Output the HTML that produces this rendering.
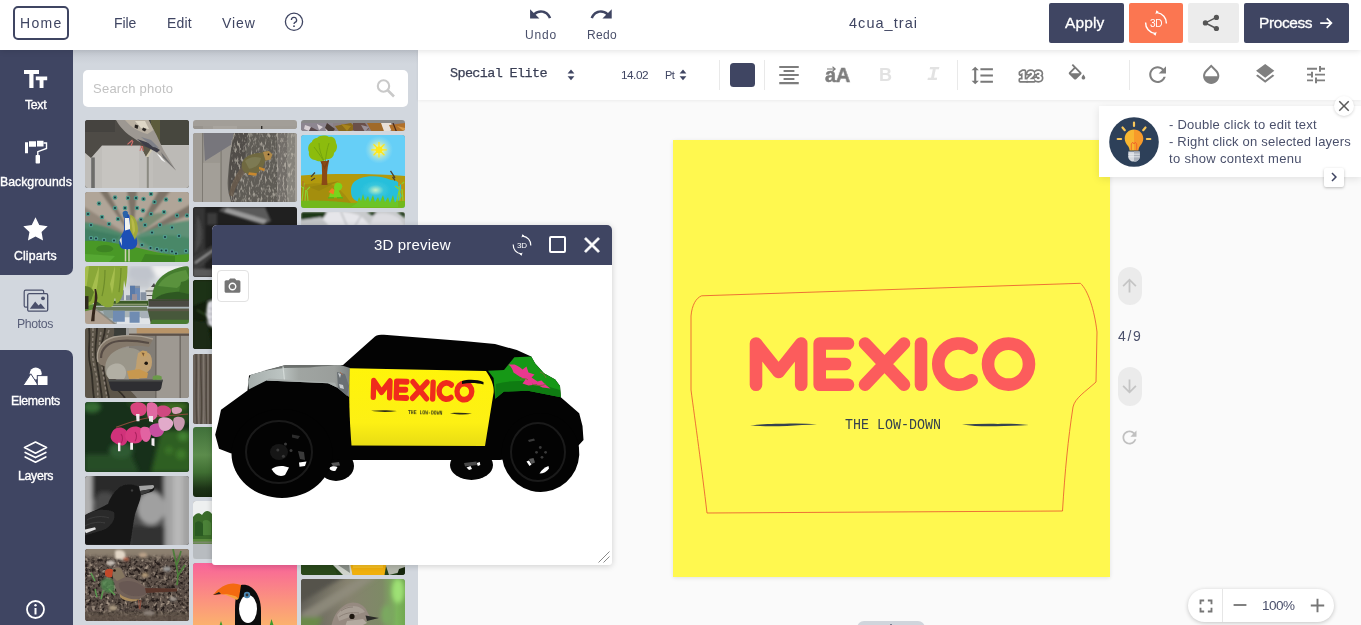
<!DOCTYPE html>
<html><head><meta charset="utf-8">
<style>
*{box-sizing:border-box;margin:0;padding:0}
html,body{width:1361px;height:625px;overflow:hidden;background:#fafafa;font-family:"Liberation Sans",sans-serif;color:#3f4562}
.abs{position:absolute}
.t,text{will-change:transform}
#top{position:absolute;left:0;top:0;width:1361px;height:50px;background:#fff;z-index:5;box-shadow:0 1px 6px rgba(0,0,0,.12)}
#side{position:absolute;left:0;top:50px;width:73px;height:575px;background:#d2d7de}
#panel{position:absolute;left:73px;top:50px;width:345px;height:575px;background:#d2d7de;overflow:hidden}
#tool{position:absolute;left:418px;top:50px;width:943px;height:50px;background:#fff;box-shadow:0 1px 3px rgba(0,0,0,.06)}
.t{position:absolute;white-space:nowrap;line-height:1}
.lab{font-size:12.3px;color:#fff;-webkit-text-stroke:.35px #fff}
.ph{position:absolute;width:104px;border-radius:3px;overflow:hidden;background:#888}
</style></head><body>
<!-- TOPBAR -->
<div id="top">
<div class="abs" style="left:13px;top:6px;width:56px;height:34px;border:2px solid #3f4562;border-radius:5px"></div>
<div class="t" style="left:20px;top:16px;font-size:14px;letter-spacing:1.28px">Home</div>
<div class="t" style="left:114px;top:16px;font-size:14px;letter-spacing:-.1px">File</div>
<div class="t" style="left:166.500px;top:16px;font-size:14px;letter-spacing:.2px">Edit</div>
<div class="t" style="left:221.500px;top:16px;font-size:14px;letter-spacing:.94px">View</div>
<svg class="abs" style="left:283px;top:11px" width="22" height="22" viewBox="0 0 22 22"><circle cx="11" cy="10.8" r="8.6" fill="none" stroke="#3f4562" stroke-width="1.3"/><path d="M8.4 9a2.6 2.6 0 1 1 3.6 2.400c-.7.4-1 .8-1 1.7" fill="none" stroke="#3f4562" stroke-width="1.3"/><circle cx="11" cy="15.2" r=".9" fill="#3f4562"/></svg>
<svg class="abs" style="left:527.900px;top:1.500px" width="24.800" height="24.800" viewBox="0 0 24 24"><path d="M12.500 8c-2.650 0-5.050.99-6.900 2.600L2 7v9h9l-3.620-3.620c1.390-1.160 3.160-1.880 5.120-1.880 3.540 0 6.550 2.310 7.600 5.500l2.370-.78C21.080 11.030 17.150 8 12.500 8z" fill="#3f4562"/></svg>
<svg class="abs" style="left:589.400px;top:1.500px" width="24.800" height="24.800" viewBox="0 0 24 24"><path d="M18.400 10.600C16.550 8.990 14.150 8 11.500 8c-4.650 0-8.580 3.030-9.960 7.220L3.900 16c1.050-3.190 4.050-5.500 7.600-5.500 1.950 0 3.730.72 5.120 1.880L13 16h9V7l-3.600 3.600z" fill="#3f4562"/></svg>
<div class="t" style="left:524.7px;top:29px;font-size:12px;letter-spacing:.84px;color:#4a506b">Undo</div>
<div class="t" style="left:586.7px;top:29px;font-size:12px;letter-spacing:.3px;color:#4a506b">Redo</div>
<div class="t" style="left:849px;top:16px;font-size:14.500px;letter-spacing:1.04px">4cua_trai</div>
<div class="abs" style="left:1049px;top:3px;width:75px;height:40px;background:#3f4562;border-radius:2px"></div>
<div class="t" style="left:1064.800px;top:14.500px;font-size:15.500px;letter-spacing:.15px;color:#fff;-webkit-text-stroke:.3px #fff">Apply</div>
<div class="abs" style="left:1129px;top:3px;width:54px;height:40px;background:#fb7651;border-radius:2px"></div>
<svg class="abs" style="left:1143px;top:10px" width="26" height="26" viewBox="0 0 26 26"><path d="M2.6 12.500A10.5 10.5 0 0 0 12 23.400M23.4 13.500A10.5 10.5 0 0 0 14 2.6" fill="none" stroke="#fff" stroke-width="1.4"/><path d="M10.2 24l3.4-2.2-1 4zM15.8 2l-3.4 2.2 1-4z" fill="#fff"/><text x="13" y="16.6" font-family="Liberation Sans" font-size="10" fill="#fff" text-anchor="middle" letter-spacing="-.3">3D</text></svg>
<div class="abs" style="left:1188px;top:3px;width:51px;height:40px;background:#ececec;border-radius:2px"></div>
<svg class="abs" style="left:1200px;top:13px" width="22" height="20" viewBox="0 0 22 20"><path d="M16.400 4.400L5.400 9.900l11 5.600" fill="none" stroke="#555" stroke-width="1.500"/><circle cx="16.400" cy="4.400" r="2.600" fill="#555"/><circle cx="5.400" cy="9.900" r="2.600" fill="#555"/><circle cx="16.400" cy="15.500" r="2.600" fill="#555"/></svg>
<div class="abs" style="left:1244px;top:3px;width:105px;height:40px;background:#3f4562;border-radius:2px"></div>
<div class="t" style="left:1259.300px;top:14.500px;font-size:15.500px;letter-spacing:-.4px;color:#fff;-webkit-text-stroke:.3px #fff">Process</div>
<svg class="abs" style="left:1318px;top:15px" width="16" height="16" viewBox="0 0 16 16"><path d="M2.2 8.100h11M8.7 3.400l4.7 4.7-4.7 4.7" fill="none" stroke="#fff" stroke-width="1.7"/></svg>
</div>
<!-- SIDEBAR -->
<div id="side">
<div class="abs" style="left:0;top:0;width:73px;height:225px;background:#3f4562;border-bottom-right-radius:7px"></div>
<div class="abs" style="left:0;top:300px;width:73px;height:275px;background:#3f4562;border-top-right-radius:7px"></div>
<!-- Tt -->
<svg class="abs" style="left:24px;top:20px" width="24" height="18" viewBox="0 0 24 18"><path d="M0 0h15v4h-5.500v14h-4.200v-14h-5.300zM11.8 6.500h11.400v3.700h-3.700v7.800h-3.900v-7.800h-3.800z" fill="#fff"/></svg>
<div class="t lab" style="left:25px;top:48.500px;letter-spacing:-.32px">Text</div>
<!-- roller -->
<svg class="abs" style="left:24px;top:90px" width="24" height="24" viewBox="0 0 24 24"><path d="M1 2.300h3v11h-3zM5 1.300h7v5.400h-7zM13 0.800h6.500v5.800h-6.500z" fill="#fff"/><path d="M19.5 3h3v5.500l-8.7 3.200v3.5" fill="none" stroke="#fff" stroke-width="1.4"/><rect x="11.6" y="15" width="4.4" height="8.5" rx=".8" fill="#fff"/></svg>
<div class="t lab" style="left:0.300px;top:125.800px;letter-spacing:0">Backgrounds</div>
<!-- star -->
<svg class="abs" style="left:23px;top:166.500px" width="25" height="24" viewBox="0 0 25 24"><path d="M12.5 0.300l3.750 7.750 8.450 1.150-6.150 5.9 1.5 8.4-7.550-4.050-7.550 4.050 1.5-8.4-6.150-5.9 8.450-1.150z" fill="#fff"/></svg>
<div class="t lab" style="left:13.900px;top:199.500px;letter-spacing:.13px">Cliparts</div>
<!-- photos -->
<svg class="abs" style="left:23px;top:239px" width="26" height="24" viewBox="0 0 26 24"><rect x="1.2" y="1.2" width="19.5" height="17" rx="1.5" fill="none" stroke="#4a506b" stroke-width="1.2"/><rect x="4.7" y="4.7" width="20" height="17.5" rx="1.5" fill="#d2d7de" stroke="#4a506b" stroke-width="1.3"/><path d="M6.8 19.800l5.4-7.2 3.3 3.8 2.2-2 4.6 5.400z" fill="#4a506b"/><circle cx="20" cy="9.3" r="1.9" fill="#4a506b"/></svg>
<div class="t" style="left:17.300px;top:267.500px;font-size:12.300px;letter-spacing:-.36px;color:#5a607a">Photos</div>
<!-- elements -->
<svg class="abs" style="left:23px;top:317px" width="26" height="19" viewBox="0 0 26 19"><circle cx="12.7" cy="6.5" r="6" fill="#fff"/><path d="M7.8 6.800l7.6 11.700h-15.400z" fill="#fff" stroke="#3f4562" stroke-width="1"/><rect x="14.3" y="8.6" width="10.7" height="9.9" fill="#fff" stroke="#3f4562" stroke-width="1"/></svg>
<div class="t lab" style="left:10.800px;top:345.300px;letter-spacing:-.3px">Elements</div>
<!-- layers -->
<svg class="abs" style="left:23px;top:390.500px" width="25" height="23" viewBox="0 0 25 23"><path d="M12.5 1l11 5.6-11 5.6-11-5.600z" fill="none" stroke="#fff" stroke-width="1.7" stroke-linejoin="round"/><path d="M2.2 11.400l10.3 5.2 10.3-5.200M2.2 16l10.3 5.2 10.3-5.2" fill="none" stroke="#fff" stroke-width="1.7" stroke-linejoin="round" stroke-linecap="round"/></svg>
<div class="t lab" style="left:17.900px;top:420.300px;letter-spacing:-.3px">Layers</div>
<!-- info -->
<svg class="abs" style="left:25px;top:548.500px" width="21" height="21" viewBox="0 0 21 21"><circle cx="10.5" cy="10.5" r="8.5" fill="none" stroke="#fff" stroke-width="1.8"/><rect x="9.5" y="9" width="2" height="6.5" fill="#fff"/><circle cx="10.5" cy="6.3" r="1.2" fill="#fff"/></svg>
</div>
<!-- PANEL -->
<svg width="0" height="0" style="position:absolute"><defs>
<filter id="b1" x="-5%" y="-5%" width="110%" height="110%"><feGaussianBlur stdDeviation=".45"/></filter>
<filter id="b2" x="-5%" y="-5%" width="110%" height="110%"><feGaussianBlur stdDeviation=".9"/></filter>
<filter id="b3" x="-10%" y="-10%" width="120%" height="120%"><feGaussianBlur stdDeviation="2"/></filter>
<filter id="nzd" x="0" y="0" width="100%" height="100%" color-interpolation-filters="sRGB"><feTurbulence type="fractalNoise" baseFrequency=".3" numOctaves="2" seed="3" result="n"/><feColorMatrix in="n" type="matrix" values="0 0 0 0 .14  0 0 0 0 .11  0 0 0 0 .10  2.6 2.6 0 0 -2.4"/></filter>
<filter id="nzl" x="0" y="0" width="100%" height="100%" color-interpolation-filters="sRGB"><feTurbulence type="fractalNoise" baseFrequency=".28" numOctaves="2" seed="11" result="n"/><feColorMatrix in="n" type="matrix" values="0 0 0 0 .64  0 0 0 0 .58  0 0 0 0 .52  0 2.4 2.4 0 -2.5"/></filter>
<filter id="nzg" x="0" y="0" width="100%" height="100%" color-interpolation-filters="sRGB"><feTurbulence type="fractalNoise" baseFrequency=".5 .2" numOctaves="2" seed="7" result="n"/><feColorMatrix in="n" type="matrix" values="0 0 0 0 .72  0 0 0 0 .70  0 0 0 0 .66  0 2.6 2.6 0 -2.55"/></filter>
</defs></svg>
<div id="panel">
<div class="abs" style="left:0;top:0;width:345px;height:14px;background:linear-gradient(#c4c9d1,#d2d7de)"></div>
<div class="abs" style="left:10px;top:20px;width:325px;height:36.600px;background:#fff;border-radius:5px"></div>
<div class="t" style="left:20.300px;top:32px;font-size:13px;letter-spacing:.24px;color:#c2c2c2">Search photo</div>
<svg class="abs" style="left:302px;top:27.600px" width="22" height="20" viewBox="0 0 22 20"><circle cx="8.500" cy="8" r="5.700" fill="none" stroke="#c9c9c9" stroke-width="2.100"/><path d="M12.700 12.300l6.300 6.200" stroke="#c9c9c9" stroke-width="2.600" fill="none"/></svg>
<div class="ph" style="left:12px;top:70px;height:67.500px"><svg width="104" height="100%" viewBox="0 0 104 67.600" preserveAspectRatio="none">
<rect width="104" height="68" fill="#4e4b46"/><rect x="62" width="42" height="26" fill="#47473e"/><rect x="66" width="9" height="25" fill="#5c5b3c"/><rect x="0" y="0" width="30" height="12" fill="#45433f"/>
<g filter="url(#b1)">
<path d="M-1 32l7 6 11-12.500h38.500l5.500 11 7-11.500h37v44h-106z" fill="#c0beba"/>
<path d="M17 26h37v42h-37z" fill="#c6c4c0"/><path d="M68 25.500h36v42h-36z" fill="#bcbab6"/>
<path d="M55.500 25.500l5.500 11 7-7.500z" fill="#5e5a48"/><path d="M61 36.500l7-11 1.500 1-7 11.500z" fill="#cfc8b0"/>
<rect x="6.200" y="37.500" width="3.600" height="31" fill="#6d6d6b"/><rect x="61.800" y="37" width="2" height="31" fill="#8b8a82"/>
<path d="M31 0c4 7 8 11 13 15l9 6 14 7 24 22.500-12.500-20.500-7-15-8-15z" fill="#9d9892"/>
<path d="M40 0l23.500 0 5 10-6 4c-8-2-16-6-22.500-14z" fill="#b9b0a2"/><path d="M50 1l10 0 4 8-8-1z" fill="#ded6c6"/>
<path d="M50 4.500l3.500 1-1 3.500-3-1.500zM58 7.500l3.500 1.500-1.500 2.500-3-1.500z" fill="#2a2624"/>
<path d="M52 19l12 4 11 7-3 2.500-12-6.500z" fill="#3d3d47"/><path d="M56 17l10 3 8 8-6-1z" fill="#7e8088"/>
<path d="M71.500 33l4 3 5 6.500-4-2.500z" fill="#f4f4f4"/><path d="M76 32l15 18.500-13-13z" fill="#6e6e6e"/>
<path d="M47.500 20l-5 4.500M48 21l-2 5M56.500 26l-1.500 5M57.500 26l.5 5" stroke="#d4706c" stroke-width="1.100" fill="none"/>
</g></svg></div>
<div class="ph" style="left:12px;top:142px;height:69.500px"><svg width="104" height="100%" viewBox="0 0 104 69.500" preserveAspectRatio="none">
<rect width="104" height="70" fill="#93887b"/>
<g filter="url(#b2)">
<path d="M48 46L-2 14v-16h16zM48 46L22-2h20zM48 46L52-2h22zM48 46L86-2h20v14zM48 46L106 22v18z" fill="#b0a598"/>
<path d="M48 46L14-2h8zM48 46L42-2h10zM48 46L74-2h12zM48 46L106 12v10z" fill="#7d7367"/>
<path d="M-2 30c14 2 28 6 40 12l10 6-14 6-36-4z" fill="#4f8a6c"/><path d="M-2 36l38 8-10 8-28-2z" fill="#3f7e62"/>
<path d="M50 44c16-8 36-14 56-16v40l-26-6-24-6z" fill="#5f9076"/><path d="M52 46c16-4 34-4 54 0v22l-30-6z" fill="#4a8868"/>
<path d="M50 30c8-6 22-10 34-10l-30 22z" fill="#7d8c74"/>
</g>
<g filter="url(#b1)"><circle cx="30" cy="5.5" r="2.300" fill="#4f9a8a"/><circle cx="30" cy="5.5" r="1" fill="#16323c"/><circle cx="43" cy="6" r="2.300" fill="#4f9a8a"/><circle cx="43" cy="6" r="1" fill="#16323c"/><circle cx="51" cy="6" r="2.300" fill="#4f9a8a"/><circle cx="51" cy="6" r="1" fill="#16323c"/><circle cx="58.5" cy="7" r="2.300" fill="#4f9a8a"/><circle cx="58.5" cy="7" r="1" fill="#16323c"/><circle cx="69.5" cy="10" r="2.300" fill="#4f9a8a"/><circle cx="69.5" cy="10" r="1" fill="#16323c"/><circle cx="81" cy="7.5" r="2.300" fill="#4f9a8a"/><circle cx="81" cy="7.5" r="1" fill="#16323c"/><circle cx="95" cy="8" r="2.300" fill="#4f9a8a"/><circle cx="95" cy="8" r="1" fill="#16323c"/><circle cx="14" cy="11.5" r="2.300" fill="#4f9a8a"/><circle cx="14" cy="11.5" r="1" fill="#16323c"/><circle cx="30" cy="16" r="2.300" fill="#4f9a8a"/><circle cx="30" cy="16" r="1" fill="#16323c"/><circle cx="40" cy="16" r="2.300" fill="#4f9a8a"/><circle cx="40" cy="16" r="1" fill="#16323c"/><circle cx="52" cy="16" r="2.300" fill="#4f9a8a"/><circle cx="52" cy="16" r="1" fill="#16323c"/><circle cx="58" cy="18.5" r="2.300" fill="#4f9a8a"/><circle cx="58" cy="18.5" r="1" fill="#16323c"/><circle cx="79" cy="20" r="2.300" fill="#4f9a8a"/><circle cx="79" cy="20" r="1" fill="#16323c"/><circle cx="92" cy="23.5" r="2.300" fill="#4f9a8a"/><circle cx="92" cy="23.5" r="1" fill="#16323c"/><circle cx="102" cy="23.5" r="2.300" fill="#4f9a8a"/><circle cx="102" cy="23.5" r="1" fill="#16323c"/><circle cx="17" cy="25" r="2.300" fill="#4f9a8a"/><circle cx="17" cy="25" r="1" fill="#16323c"/><circle cx="33" cy="27" r="2.300" fill="#4f9a8a"/><circle cx="33" cy="27" r="1" fill="#16323c"/><circle cx="56" cy="27.5" r="2.300" fill="#4f9a8a"/><circle cx="56" cy="27.5" r="1" fill="#16323c"/><circle cx="66" cy="22" r="2.300" fill="#4f9a8a"/><circle cx="66" cy="22" r="1" fill="#16323c"/><circle cx="75" cy="33" r="2.300" fill="#4f9a8a"/><circle cx="75" cy="33" r="1" fill="#16323c"/><circle cx="87" cy="35.5" r="2.300" fill="#4f9a8a"/><circle cx="87" cy="35.5" r="1" fill="#16323c"/><circle cx="6" cy="33" r="2.300" fill="#4f9a8a"/><circle cx="6" cy="33" r="1" fill="#16323c"/><circle cx="24" cy="32" r="2.300" fill="#4f9a8a"/><circle cx="24" cy="32" r="1" fill="#16323c"/><circle cx="60" cy="33" r="2.300" fill="#4f9a8a"/><circle cx="60" cy="33" r="1" fill="#16323c"/><circle cx="67" cy="40.5" r="2.300" fill="#4f9a8a"/><circle cx="67" cy="40.5" r="1" fill="#16323c"/><circle cx="80" cy="45" r="2.300" fill="#4f9a8a"/><circle cx="80" cy="45" r="1" fill="#16323c"/><circle cx="94" cy="44" r="2.300" fill="#4f9a8a"/><circle cx="94" cy="44" r="1" fill="#16323c"/><circle cx="6" cy="46" r="2.300" fill="#4f9a8a"/><circle cx="6" cy="46" r="1" fill="#16323c"/><circle cx="11" cy="46.5" r="2.300" fill="#4f9a8a"/><circle cx="11" cy="46.5" r="1" fill="#16323c"/><circle cx="19" cy="48" r="2.300" fill="#4f9a8a"/><circle cx="19" cy="48" r="1" fill="#16323c"/><circle cx="29" cy="48.5" r="2.300" fill="#4f9a8a"/><circle cx="29" cy="48.5" r="1" fill="#16323c"/><circle cx="57" cy="53" r="2.300" fill="#4f9a8a"/><circle cx="57" cy="53" r="1" fill="#16323c"/><circle cx="65.5" cy="56" r="2.300" fill="#4f9a8a"/><circle cx="65.5" cy="56" r="1" fill="#16323c"/><circle cx="72" cy="57" r="2.300" fill="#4f9a8a"/><circle cx="72" cy="57" r="1" fill="#16323c"/><circle cx="76.5" cy="58.5" r="2.300" fill="#4f9a8a"/><circle cx="76.5" cy="58.5" r="1" fill="#16323c"/><circle cx="81" cy="58.5" r="2.300" fill="#4f9a8a"/><circle cx="81" cy="58.5" r="1" fill="#16323c"/><circle cx="87" cy="59.5" r="2.300" fill="#4f9a8a"/><circle cx="87" cy="59.5" r="1" fill="#16323c"/><circle cx="91" cy="61.5" r="2.300" fill="#4f9a8a"/><circle cx="91" cy="61.5" r="1" fill="#16323c"/><circle cx="101" cy="59" r="2.300" fill="#4f9a8a"/><circle cx="101" cy="59" r="1" fill="#16323c"/><circle cx="3" cy="22" r="2.300" fill="#4f9a8a"/><circle cx="3" cy="22" r="1" fill="#16323c"/><circle cx="66" cy="2" r="2.300" fill="#4f9a8a"/><circle cx="66" cy="2" r="1" fill="#16323c"/></g>
<g filter="url(#b1)">
<path d="M-2 49c12-1 24 0 36 3l20 4c12 3 24 6 36 7l16-1v10h-108z" fill="#4a9828"/>
<path d="M14 54c6-2 12-1 14 2s-6 5-12 4-6-4-2-6zM60 62l30 2v6h-34z" fill="#3c8420"/><path d="M0 62l30 2-6 6h-24z" fill="#57a832"/>
<path d="M39.500 24c1-3 4-3 5 0l1 14 6 8c2 6 0 11-6 11.500s-10 0-11-5c-1-6 3-10 4.500-14.500z" fill="#1c4fb6"/>
<path d="M37.500 21c1-3 5-3 5.500 0l-1 4.500h-3.500z" fill="#2a62a8"/><path d="M40 26l4 0 1.500 11-5.500 1.500z" fill="#f1f1ee"/><path d="M34.500 48l2-3 .5 9z" fill="#e4e4e0"/>
<path d="M45 23c5 0 8 8 8 16l-3 9-5-10z" fill="#a0a93a"/><path d="M46 25c3 2 4 8 4 14l-2 4z" fill="#b8ba48"/>
<path d="M40.500 57v12.500M44 57v12.500" stroke="#cfcfb6" stroke-width="1.500"/>
</g></svg></div>
<div class="ph" style="left:12px;top:216px;height:58px"><svg width="104" height="100%" viewBox="0 0 104 57.800" preserveAspectRatio="none">
<rect width="104" height="58" fill="#d6dade"/>
<g filter="url(#b3)"><path d="M44 0h30v10l-14 6-18-4z" fill="#c0c4cc"/><path d="M66 0h36v6l-30 6z" fill="#f2f2f2"/><path d="M42 14h24v8h-24z" fill="#c4c8ce"/></g>
<g filter="url(#b1)">
<path d="M33.500 34.200v-10h5.500v10zM41 34.200v-5h4v-9.500h10v14.500zM55.500 34.200v-8h6v8z" fill="#8792a2"/><path d="M45 19.700h5v14h-5z" fill="#5a7aa8"/><path d="M50 22h5v12h-5z" fill="#6d8ab4"/><path d="M47 28h5v6h-5z" fill="#9a9098"/>
<path d="M61.500 34.200v-10l3-3.400h5l1 13.400z" fill="#d8d8d4"/><path d="M60.500 25h10M61.500 29.500h8" stroke="#5a5a58" stroke-width="1"/><path d="M66 21l3-4 2 4z" fill="#4a4a48"/>
<path d="M67 33c0-8 3-16 8-21 6-6 16-11 28-12l1 0v33z" fill="#447c2e"/><path d="M73 20c4-8 14-14 28-16l3 8-12 10z" fill="#5a923e"/><path d="M70 33c6-6 18-8 34-7v8z" fill="#2e5822"/><path d="M96 16l8-2v14l-10-2z" fill="#3a6e28"/>
<path d="M63.500 33.200h40.500v10.500h-40.500z" fill="#4c4842"/><path d="M63.500 33.200h40.500v1.500h-40.500z" fill="#3a4a2c"/>
<path d="M9 34.700h54.500v5h-54.500z" fill="#3a5a28"/><path d="M16 37.700h46v1h-46z" fill="#a4ac84"/>
<path d="M8 40.700h96v18h-96z" fill="#aab4b8"/><path d="M10 40.700h52v4h-52z" fill="#6a7a5c"/>
<path d="M32 51h34v7h-34z" fill="#e0e4e8"/><path d="M27.800 44.600h12v11h-12zM44.600 45.600h10v11h-10z" fill="#6f8cb2"/><path d="M56 46h8v6h-8z" fill="#a8b0b8"/><path d="M18 44h10v8h-8z" fill="#8a9a9c"/>
<path d="M62.500 42.600h41.500v16h-38z" fill="#46583a"/><path d="M62.500 42.600h41.500v2.400h-41.500z" fill="#5c5848"/><path d="M67 53.600h37v5h-39z" fill="#4a7a30"/>
<path d="M0 44l9-1.400 21.700 15v1h-30.700z" fill="#b0a090"/><path d="M9 42.600l2.500 0 19.500 15-1.500 1z" fill="#8a8880"/><path d="M0 38h9v5l-9 2z" fill="#5a8a30"/>
<path d="M0 0h42.500c0 8-.5 14-2 22l-1.500-8-1 14c-2 6-4 9-7 9.500l-1-6-2 8c-3 2-7 2-10 0l-6-4-12 6z" fill="#8aa838"/>
<path d="M4 0c-1 10-2 20-4 28v-28zM14 0c0 12-2 22-4 30l-3-8zM30 0c0 10-1 20-3 28l-2-10z" fill="#a6be4e"/><path d="M0 20c4 0 7 2 9 6l-3 9-6 3z" fill="#5e7e26"/><path d="M20 4c0 10-1 18-3 26M36 2c0 8-1 16-2 24" stroke="#6e8c2a" stroke-width="1.200" fill="none"/>
<path d="M9.500 23c1 8 0 14-2 20l-1.500 12h3.500c0-8 1.500-14 2.500-20 1-4 0-8-1-12z" fill="#35281a"/><path d="M0 30h3.500v13h-3.500z" fill="#2e2a1c"/>
</g></svg></div>
<div class="ph" style="left:12px;top:278px;height:69.700px"><svg width="104" height="100%" viewBox="0 0 104 69.700" preserveAspectRatio="none">
<rect width="104" height="70" fill="#948f88"/>
<g filter="url(#b1)">
<rect x="41" y="0" width="63" height="70" fill="#98938c"/><rect x="44" y="7" width="26" height="63" fill="#827d76"/><rect x="70" y="6" width="1.500" height="64" fill="#6e6962"/><rect x="94.500" y="6" width="1.500" height="64" fill="#726d66"/><rect x="72" y="6" width="22" height="64" fill="#9e9992"/>
<rect x="28" y="0" width="14" height="8.500" fill="#3a3c38"/><rect x="41" y="0" width="3" height="10" fill="#9a9a98"/><rect x="44" y="0" width="8" height="6" fill="#a8a49c"/><rect x="51.700" y="0" width="53" height="5.600" fill="#b89468"/><rect x="44" y="5.600" width="61" height="2.200" fill="#5c5148"/>
<path d="M0 0h29c1 6-1 12-5 18-4 8-4 16-2 24 4 10 16 10 30 28h-52z" fill="#5c544a"/>
</g>
<g filter="url(#b1)"><path d="M4 0c2 12-2 24 1 36s2 22 4 34M12 0c0 10-3 20-1 30s4 26 6 40M20 0c0 8-4 14-4 22s4 30 8 48M26 56c4 4 10 8 14 14" stroke="#332d27" stroke-width="1.800" fill="none"/><path d="M8 0c0 14-2 28 2 42s2 18 3 28M16 4c-2 10-2 20 0 30s4 24 6 36M24 2c-2 6-3 10-3 14" stroke="#8a8074" stroke-width="1.500" fill="none" stroke-dasharray="3 2"/></g>
<g filter="url(#b1)">
<path d="M13 34c-3-12 4-22 16-25 12-2 26-2 39 2l-4 8c-10-2-22-2-30 2-6 4-10 10-12 18-4-1-8-3-9-5z" fill="#84786a"/><path d="M16 30c0-10 8-16 18-17 10-1 20 0 30 2" stroke="#564c44" stroke-width="2.200" fill="none"/><path d="M13 34c-3-12 4-22 16-25 12-2 26-2 39 2" stroke="#a89e90" stroke-width="1.400" fill="none"/>
<path d="M20.500 44c-2-14 8-24 22-24 8 0 12 2 14 6l2 16-6 9h-28c-2-2-4-4-4-7z" fill="#9a968a"/><path d="M22 42c2-6 10-8 15-5s5 10 2 14h-15c-2-3-3-6-2-9z" fill="#b2afa4"/>
<path d="M53 25c4-2 10-2 12.500 2 2 4 2 10 0 14l-4 4-8 6-8-2c4-4 6-10 6-16z" fill="#c0a070"/><path d="M54.700 24l3-1.500 4.500 1-1 5-5 0z" fill="#c8a060"/><path d="M56.500 24.500l3 .500-1 3.500z" fill="#7a5a3a"/><path d="M42 43l12-2 9 4-1 5-18 1z" fill="#c89850"/><circle cx="61.200" cy="35.200" r="1.800" fill="#1a1410"/>
<path d="M23.300 51.700h54.500l-1.500 8c-.5 2-2 3.300-5 3.300h-41c-3 0-4.500-1.300-5-3.300z" fill="#2e2e30"/><path d="M23.300 51.700h54.500v1.800h-54.500z" fill="#4c4e4c"/><path d="M67.700 48.500c3-1.500 6-1.500 9 0v3.200h-9z" fill="#6a9a4a"/>
</g></svg></div>
<div class="ph" style="left:12px;top:352px;height:70px"><svg width="104" height="100%" viewBox="0 0 104 69.500" preserveAspectRatio="none">
<rect width="104" height="70" fill="#17301a"/>
<g filter="url(#b3)"><ellipse cx="7" cy="5" rx="9" ry="6" fill="#356a32"/><path d="M76 28h30v42h-40z" fill="#2e5e22"/><circle cx="98" cy="34" r="5" fill="#438230"/><circle cx="96" cy="52" r="5" fill="#3c7a2a"/><circle cx="84" cy="48" r="4" fill="#3a7428"/><path d="M0 52h46l8 18h-54z" fill="#284e26"/><ellipse cx="36" cy="48" rx="12" ry="8" fill="#2e5a32"/><path d="M40 0h64v20l-30 4z" fill="#25481e"/><ellipse cx="88" cy="4" rx="14" ry="4" fill="#3c6c24"/></g>
<g filter="url(#b1)">
<path d="M31 25c14-5 30-10 44-11s20-1 28-2" stroke="#8a4a3a" stroke-width="1" fill="none"/>
<path d="M47 2c4-3 12-2 14 2s0 9-5 10-9-1-10-5 -1-5 1-7z" fill="#d8457e"/><path d="M63 1c4-2 9 0 10 5s-1 11-5 12-6-3-6-8 -1-7 1-9z" fill="#e06aa2"/><path d="M73 5c4-3 12-1 13 3s-4 7-9 7-6-7-4-10z" fill="#cf4880"/><path d="M87 6c4-2 10-1 10 2s-4 4-7 4-4-4-3-6z" fill="#d8a0b8"/>
<path d="M51 12h3.500v7h-3zM64 14h4v6l-4-1z" fill="#f0e6ec"/>
<path d="M27 30c2-5 9-6 13-3s4 10 1 14-8 2-12-1-4-6-2-10z" fill="#d0307a"/><path d="M42 28c3-4 10-5 14-2s3 10 0 13-9 3-13 0-3-8-1-11z" fill="#d83a80"/><path d="M56 26c2-2 7-2 9 1s1 10-2 12-6-1-7-5 -1-6 0-8z" fill="#e264a2"/><path d="M65 24c3-3 10-4 13-1s1 9-3 11-9 0-10-4 -1-4 0-6z" fill="#c650a0"/>
<path d="M74 17c3-3 10-2 13 1s0 8-4 10-8 0-9-4 -1-5 0-7z" fill="#e2aaca"/><path d="M89 16c3-2 8-2 10 1s0 9-3 11-6-1-7-5 -1-5 0-7z" fill="#c898b0"/>
<path d="M36 32c2 2 2 6 0 9M50 30c2 2 2 6 0 9" stroke="#a8205c" stroke-width="1" fill="none"/>
<path d="M33 40.500h2.400v8.500h-2.400zM45.200 40.500h2.800v7h-2.800zM66.500 36h3v8l-3-1z" fill="#f4ecf0"/>
</g></svg></div>
<div class="ph" style="left:12px;top:425.500px;height:69px"><svg width="104" height="100%" viewBox="0 0 104 69.200" preserveAspectRatio="none">
<rect width="104" height="70" fill="#4a4a4a"/>
<g filter="url(#b3)"><rect x="-4" y="-4" width="12" height="46" fill="#b0b0b0"/><rect x="7" y="-4" width="73" height="28" fill="#2a2a2a"/><rect x="79" y="-4" width="30" height="80" fill="#a2a2a2"/><rect x="88" y="-4" width="10" height="80" fill="#b8b8b8"/><ellipse cx="66" cy="32" rx="14" ry="17" fill="#a0a0a0"/><rect x="44" y="50" width="36" height="24" fill="#303030"/><rect x="-4" y="40" width="12" height="34" fill="#5a5a5a"/><ellipse cx="20" cy="24" rx="10" ry="8" fill="#4a4a4a"/></g>
<g filter="url(#b1)">
<path d="M33 13c3-4 10-5 16-4l6 2 14 0c1 2 0 4-3 5l-10 3-1 5-5 14c-2 10-3 20-5 31h-46v-29l24-12c2-6 6-12 10-15z" fill="#161616"/>
<path d="M54 10l14-1c2 1 1 3-1 4l-12 2z" fill="#a4a4a4"/><path d="M55 15l11-2-2 3-8 3z" fill="#3a3a3a"/><circle cx="47" cy="14.500" r="1.200" fill="#3c3c3c"/>
<path d="M-1 40c8-6 20-8 30-4 2 6-2 14-10 18l-20 6z" fill="#2b2b2b"/><path d="M2 44c8-4 16-4 22-2M0 50c8-4 14-4 20-3" stroke="#404040" stroke-width=".8" fill="none"/>
<path d="M-1 54l11-2.500 1 2-10 4z" fill="#e0e0e0"/>
</g></svg></div>
<div class="ph" style="left:12px;top:499px;height:71.600px"><svg width="104" height="100%" viewBox="0 0 104 71.500" preserveAspectRatio="none">
<rect width="104" height="72" fill="#5c5048"/>
<rect width="104" height="72" filter="url(#nzd)"/><rect width="104" height="72" filter="url(#nzl)"/>
<g filter="url(#b3)"><rect x="-4" y="-4" width="112" height="12" fill="#8c8070"/><rect x="-4" y="64" width="112" height="12" fill="#5e5248" opacity=".8"/></g>
<g filter="url(#b2)"><path d="M30 2c3-2 9-1 10 2l1 5c-3 2-9 2-11 0z" fill="#e2d6c6"/><path d="M39 8l5 1-1 3-5-1z" fill="#b05a40"/><ellipse cx="26" cy="14" rx="4" ry="2.500" fill="#c8c0b8"/><ellipse cx="82" cy="20" rx="4" ry="2.500" fill="#9a9a98"/><ellipse cx="58" cy="6" rx="4" ry="2.500" fill="#b8a088"/><ellipse cx="28" cy="59" rx="4" ry="3" fill="#a89880"/><ellipse cx="60" cy="26" rx="3.500" ry="2.500" fill="#b09878"/><ellipse cx="88" cy="50" rx="4" ry="2" fill="#a09890"/><ellipse cx="64" cy="64" rx="6" ry="2.500" fill="#8a8078"/></g>
<g filter="url(#b1)">
<path d="M88 0l3 14 2 12M96 2l-4 14M100 16l-8 12M93 26l-1 10" stroke="#4d7d3a" stroke-width="1.700" fill="none"/>
<path d="M16 32c4-4 10-4 13 0l1 8c-2 4-6 5-10 3s-5-7-4-11z" fill="#4f8a50" opacity=".8" filter="url(#b2)"/><path d="M6 24l4 8M10 40l2 8M18 42l-2 8M24 40l6 6" stroke="#5a9a50" stroke-width="1.500" fill="none"/>
<path d="M27 19c3-3 8-2 10 1l4 8c8 1 16 5 20 11l1 6c-4 4-10 6-18 6-8-1-12-6-14-14l-2-8c-1-4-2-7-1-10z" fill="#72625a"/><path d="M28 20c2-2 6-2 8 0l4 8-8 4-4-4z" fill="#84745e"/>
<path d="M34 34c8-4 18-2 26 5l1 6c-6 3-14 3-20 0s-8-7-7-11z" fill="#675852"/><path d="M35 45c4 4 12 6 20 5l-4 2c-6 1-12 0-16-4z" fill="#aa8c5c"/>
<path d="M20 22c2-3 6-3 8-1l-1 7c-3 1-6 0-7-2z" fill="#c24a2a"/><circle cx="29.500" cy="21.500" r="1.300" fill="#1c1410"/>
<path d="M60 39l32 .5v3l-31 1.500z" fill="#58362c"/><path d="M53.500 51l1 9M56 51l-1 9" stroke="#8a5040" stroke-width="1.100"/>
</g></svg></div>
<div class="ph" style="left:120px;top:70px;height:8.500px;background:#a29e98"><svg width="104" height="100%" viewBox="0 0 104 8.500" preserveAspectRatio="none"><rect width="104" height="9" fill="#a09c96"/><rect x="20" width="24" height="9" fill="#a8a49e"/><rect x="68" width="1.400" height="9" fill="#2e2c28"/><rect x="0" width="10" height="9" fill="#98948e"/></svg></div>
<div class="ph" style="left:120px;top:82.800px;height:69.400px"><svg width="104" height="100%" viewBox="0 0 104 69.700" preserveAspectRatio="none">
<rect width="104" height="70" fill="#9b9790"/>
<g filter="url(#b1)">
<rect x="0" y="0" width="9.500" height="70" fill="#a19d96"/><rect x="9" y="0" width="1.200" height="70" fill="#7e7a73"/><rect x="27.500" y="0" width="1.200" height="70" fill="#7e7a73"/><rect x="10" y="30" width="17" height="40" fill="#a39f98"/>
<path d="M10.400 0h31l-3 11.500-26.400 16.500z" fill="#77767c"/>
<path d="M41 0h61v70h-63c-4-8-5-16-4-26 1-16 3-30 6-44z" fill="#5f5c57"/><rect x="102" y="0" width="2" height="70" fill="#a09c95"/>
<path d="M84 0h18v70h-18z" fill="#7a7670" opacity=".7"/><path d="M94 0h8v70h-8z" fill="#8f8b84" opacity=".7"/><path d="M41 0h14l-4 30-10 40h-3c-4-20-1-50 3-70z" fill="#4c4945" opacity=".7"/>
</g>
<rect x="38" y="0" width="64" height="70" filter="url(#nzg)" opacity=".8"/>
<g filter="url(#b1)">
<path d="M50 32c-6 8-12 18-14 30l4 2c2-10 8-20 14-26z" fill="#6a5c4c" opacity=".85"/>
<path d="M49 30c2-6 10-10 18-10l7-2 5 3-2 5-5 2c-1 6-4 10-8 12l-4 3-8-3c-3-3-4-7-3-10z" fill="#6f6941"/><path d="M52 28c4-4 10-5 16-3-1 6-5 10-12 11z" fill="#7d7a52"/>
<path d="M70 19l6-1 3.500 3.500-2 5-5 1z" fill="#b08a4a"/><path d="M56 39.500l8 1-1 2.500-8-1zM66 34l6 2-1 2.500-5-2z" fill="#c8882e"/><circle cx="75.500" cy="21.500" r=".9" fill="#1a1410"/>
</g></svg></div>
<div class="ph" style="left:120px;top:156.800px;height:70px"><svg width="104" height="100%" viewBox="0 0 104 70" preserveAspectRatio="none"><rect width="104" height="70" fill="#202020"/>
<g filter="url(#b2)"><path d="M30 0h42l6 14-8 4-44-14z" fill="#5a5a5a"/><path d="M34 1l40 12-3 4-40-12z" fill="#9a9a9a"/><path d="M0 0h12v70h-12z" fill="#343434"/><path d="M4 8c4 6 6 16 4 28l-6 10z" fill="#4a4a4a"/><path d="M14 6h10v12h-10z" fill="#3a3a3a"/>
<path d="M0 50l20-12 6 6-18 16-8 4z" fill="#3c3c3c"/><path d="M2 56l20-14" stroke="#b8b8b8" stroke-width="1.200"/><path d="M0 62h20v8h-20z" fill="#5a5a5a"/></g></svg></div>
<div class="ph" style="left:120px;top:230px;height:69.400px;background:#16260f"><svg width="104" height="100%" viewBox="0 0 104 69.400" preserveAspectRatio="none"><rect width="104" height="70" fill="#131f0d"/><g filter="url(#b2)"><path d="M0 0h20v18l-20 8z" fill="#1e3216"/><path d="M0 40l14 2 6 28h-20z" fill="#1a2c12"/><path d="M4 30l14 8" stroke="#2c4420" stroke-width="2"/><path d="M15 22l7-3v30l-6-4c-3-8-3-16-1-23z" fill="#e6e6ec"/><path d="M15 28l7 2M15 34l7 0M15 40l7-1" stroke="#a8a8b4" stroke-width="1"/></g></svg></div>
<div class="ph" style="left:120px;top:303.800px;height:70px;background:#5a4a3c"><svg width="104" height="100%" viewBox="0 0 104 70" preserveAspectRatio="none"><rect width="104" height="70" fill="#6a625a"/><g filter="url(#b1)"><path d="M3 0c1 20-1 40 1 70M8 0c-1 24 2 46 0 70M13 0c1 20-1 44 1 70M17 0v70" stroke="#4f463e" stroke-width="1.400" fill="none"/><path d="M5.500 0c1 22-1 44 .5 70M10.500 0c0 24 1 48 0 70M15 0v70" stroke="#80776e" stroke-width="1.200" fill="none"/></g></svg></div>
<div class="ph" style="left:120px;top:377.200px;height:69.500px;background:linear-gradient(#40703a,#5c8c4c 40%,#3f6e32 65%,#1c3216 88%,#16280f)"></div>
<div class="ph" style="left:120px;top:451.200px;height:57.400px"><svg width="104" height="100%" viewBox="0 0 104 57.400" preserveAspectRatio="none"><rect width="104" height="58" fill="#eef0f0"/><g filter="url(#b1)"><path d="M0 16c3-4 6-5 9-2 3-5 7-5 10-1l1 4v26h-20z" fill="#3a6c2c"/><path d="M2 22c3-3 6-2 8 1s2 8 0 12h-8z" fill="#2c5a24"/><path d="M10 20c3-2 6-1 8 2v12h-8z" fill="#4c8238"/><rect y="38" width="104" height="5" fill="#5a8a3c"/><rect y="43" width="104" height="15" fill="#b8bcc0"/><rect y="40.500" width="104" height="2" fill="#7a8a6a"/></g></svg></div>
<div class="ph" style="left:120px;top:513px;height:70px"><svg width="104" height="100%" viewBox="0 0 104 70" preserveAspectRatio="none">
<defs><linearGradient id="tg" x1="0" y1="0" x2="0" y2="1"><stop offset="0" stop-color="#f8649a"/><stop offset=".5" stop-color="#fb9080"/><stop offset=".92" stop-color="#fbb46c"/><stop offset="1" stop-color="#fbb46c"/></linearGradient></defs>
<rect width="104" height="70" fill="url(#tg)"/>
<path d="M48 22c10-2 20 8 20 26v22h-26v-20c0-10 0-20 6-28z" fill="#0c0c0c"/><ellipse cx="55" cy="46" rx="9" ry="14" fill="#fff"/><circle cx="54" cy="32" r="3.2" fill="#4a88b4"/><circle cx="54" cy="32" r="1.4" fill="#333"/>
<path d="M48 22c-10-4-20 0-28 10 10-2 18 0 26 3z" fill="#f46a10"/><path d="M20 32l6-3 2 2z" fill="#222"/><path d="M30 31c6 0 10 1 16 4l-2 2c-4-2-8-4-14-6z" fill="#f8a23a"/>
<path d="M24 70l4-12 4 12zM74.500 70l4-14 4.500 14z" fill="#3a9a2a"/>
</svg></div>
<div class="ph" style="left:228px;top:70px;height:10.600px"><svg width="104" height="100%" viewBox="0 0 104 10.600" preserveAspectRatio="none"><rect width="104" height="11" fill="#8a7f84"/>
<g filter="url(#b1)"><path d="M0 0h32v11h-32z" fill="#8d8690"/><path d="M4 2l6 2-2 4-5-2zM16 1l6 3-4 3zM24 5l5 2-3 3z" fill="#d8d0d4"/><path d="M10 4l8 4-4 3-6-3z" fill="#5a4a4c"/><path d="M26 0l8 6-4 5-6-6z" fill="#4a3a34"/>
<path d="M34 3l16-3 6 6-16 5z" fill="#8a6a1a"/><path d="M40 1l10 2-4 5z" fill="#a8841e"/><path d="M52 0h12l4 6-10 5-6-4z" fill="#6a5048"/><path d="M60 2l8 2-4 5z" fill="#9a9098"/>
<path d="M66 0h16l4 8-14 3z" fill="#a06a2a"/><path d="M80 0l10 0 2 6-8 5z" fill="#e8e0d8"/><path d="M88 2l16-2v11h-12z" fill="#b0702c"/><path d="M92 0l4 10" stroke="#4a2a1a" stroke-width="1.200"/><path d="M96 3l8 2v4z" fill="#d89a48"/></g></svg></div>
<div class="ph" style="left:228px;top:84.900px;height:73.600px"><svg width="104" height="100%" viewBox="0 0 104 73.700" preserveAspectRatio="none">
<defs><radialGradient id="sun"><stop offset="0" stop-color="#fff27a"/><stop offset=".3" stop-color="#e8f4a0" stop-opacity=".9"/><stop offset="1" stop-color="#a8e4f8" stop-opacity="0"/></radialGradient><radialGradient id="pd"><stop offset="0" stop-color="#c8f0c4"/><stop offset=".55" stop-color="#38c6dc"/><stop offset="1" stop-color="#27bfdb"/></radialGradient></defs>
<rect width="104" height="74" fill="#66cff7"/><circle cx="78" cy="14.800" r="14" fill="url(#sun)"/>
<g stroke="#ffe61a" stroke-width="1.300"><path d="M78 7v15.600M70.200 14.800h15.600M72.500 9.300l11 11M83.500 9.300l-11 11"/></g><circle cx="78" cy="14.800" r="3.400" fill="#ffe818"/>
<g filter="url(#b1)">
<path d="M0 40.500c30-2 72-2 104 .5v33h-104z" fill="#b29a10"/><path d="M0 50c16-3 28-2 36 2l8 8 6 8h-50z" fill="#a48e0e"/><path d="M8 52l30-6-20 10z" fill="#9a860c"/>
<path d="M0 66c16-1 34 0 50 2l54-2v8h-104z" fill="#72b81a"/>
<path d="M60 43c8-3 22-2 30 2 4 0 8 2 10 5s-2 6 0 9-2 8-8 9-20 2-30 0-12-6-12-12 2-10 10-13z" fill="#27bfdb"/><ellipse cx="74.600" cy="55.200" rx="15" ry="9.500" fill="url(#pd)"/>
<path d="M56 68l2-6 2 4 2-7 2 7 3-5 2 6 3-7 2 7 3-5 2 5 3-7 2 7 3-5 2 6 3-8 2 8 3-6v10h-47z" fill="#6cc428"/>
<path d="M20.500 26c.5 8 1 16 0 24h6c-1-8-.5-16 1.500-24z" fill="#8a4a18"/><path d="M19.500 25l4 8 4-8" stroke="#7a4216" stroke-width="1.400" fill="none"/>
<path d="M16 3c3-3 9-3 12-1 4-1 7 2 7 6 2 3 1 8-2 10 0 4-4 7-8 6-3 3-8 3-11 1-4 0-7-4-6-8-2-4 0-9 3-10 0-2 3-4 5-4z" fill="#8cbc10"/><path d="M18 8c0 6 2 12 5 18M28 8c-2 6-3 12-3.500 18M13 12c3 4 6 8 9 13" stroke="#6f9e0a" stroke-width=".8" fill="none"/>
<path d="M29 58c1-4 7-5 9-2l3 6.500h-13zM34 49c2-2 6-1.500 7 1s-1 5.500-4 6-4-2-4-4z" fill="#7ad41e"/><path d="M27.500 57l3.500-4 2.500 2-1 4.500z" fill="#f08020"/><path d="M27 62h6v1.500h-6zM36 62h6v1.500h-6z" fill="#5cb414"/>
<path d="M1 66l2-18M4 66l1-14M7 66l-1-10M5 56l4-4M3 54l-3-3" stroke="#8ad030" stroke-width="1.200" fill="none"/><path d="M2 46v6M5 50v5" stroke="#b07820" stroke-width="1.400"/>
<path d="M99 66l-1-18M102 66l-1-12M96 66l2-10M98 54l-4-3M100 50l3-3" stroke="#8ad030" stroke-width="1.200" fill="none"/><path d="M98 45v6M101 49v5" stroke="#c08a20" stroke-width="1.400"/>
<path d="M10 42l4-4.500M10 45.500l4-2.500M89.500 36l4.500 7M91.500 42l2.500 3.500" stroke="#4a4030" stroke-width="1.300"/>
</g></svg></div>
<div class="ph" style="left:228px;top:161.800px;height:70px"><svg width="104" height="100%" viewBox="0 0 104 70" preserveAspectRatio="none"><rect width="104" height="70" fill="#c8cacc"/>
<g filter="url(#b2)"><path d="M0 0h28l-6 6-22 2z" fill="#1c3814"/><path d="M66 0h10l-4 4zM96 0h8v6z" fill="#1c3814"/>
<path d="M26 0c10-2 24 0 34 4l10 10h-52z" fill="#e6e6ea"/><path d="M74 2c8-2 18 0 24 4l6 8h-36z" fill="#dcdce0"/><path d="M0 8l20-3 8 9h-28z" fill="#c2c4c6"/><path d="M40 0l6 14M60 4l-6 10" stroke="#b4b6ba" stroke-width="1.200"/></g></svg></div>
<div class="ph" style="left:228px;top:455px;height:69.500px"><svg width="104" height="100%" viewBox="0 0 104 69.500" preserveAspectRatio="none"><rect width="104" height="70" fill="#24421a"/>
<g filter="url(#b1)"><path d="M0 58h32l4 12h-36z" fill="#2a4a1c"/><path d="M30 58l20 0 2 12h-10c-4-4-8-8-12-12z" fill="#d0d4cc"/><path d="M34 58l14 0 1 10z" fill="#8a9088"/><path d="M84 58h20v8l-16 4z" fill="#b4b8ac"/><path d="M49 58h36.500l-2 12h-32z" fill="#f0b010"/><path d="M52 60h30v3h-30z" fill="#f8c020"/><path d="M98 64l6-2v8h-8z" fill="#16280e"/></g></svg></div>
<div class="ph" style="left:228px;top:529px;height:70px"><svg width="104" height="100%" viewBox="0 0 104 70" preserveAspectRatio="none">
<defs><linearGradient id="bg9" x1="0" y1="0" x2="1" y2="0"><stop offset="0" stop-color="#64625a"/><stop offset=".45" stop-color="#86826f"/><stop offset=".78" stop-color="#7e8a66"/><stop offset=".92" stop-color="#7cb45c"/><stop offset="1" stop-color="#72a850"/></linearGradient></defs>
<rect width="104" height="70" fill="url(#bg9)"/>
<g filter="url(#b3)"><path d="M-4 -4h50l-50 30z" fill="#55534b"/><path d="M0 34l60-36 16 0-76 50z" fill="#918d7e" opacity=".8"/><ellipse cx="97" cy="12" rx="6" ry="12" fill="#9ee074"/><path d="M-4 38h26l-6 12h-20z" fill="#6a8a4a"/><ellipse cx="86" cy="36" rx="6" ry="10" fill="#7aa860"/></g>
<g filter="url(#b1)">
<path d="M30 50c1-8 4-16 9.500-20.500 4-4 8-6 12.500-6 6 0 10 3 12.500 6l4 7.500-2 4-8 3v6z" fill="#968a80"/><path d="M36 36c4-6 10-9 16-9s10 3 12 6l-10 3-16 6z" fill="#a89e94"/><path d="M40 32c4-3 8-4 12-4M38 38c6-4 12-5 20-4" stroke="#857a70" stroke-width=".8" fill="none"/>
<path d="M64.500 36.400l13.500 2.600-12 3z" fill="#2a2a28"/><circle cx="51" cy="37.400" r="2.600" fill="#1a1210"/><path d="M46 42l16-2 4 4-8 4h-14z" fill="#b4aaa0"/>
</g></svg></div>
</div>
<!-- TOOLBAR -->
<div id="tool">
<div class="t" style="left:31.500px;top:17.300px;font-family:'Liberation Mono',monospace;font-size:13.500px;letter-spacing:-.65px;color:#3a3f55;-webkit-text-stroke:.25px #3a3f55">Special Elite</div>
<svg class="abs" style="left:149px;top:19px" width="8" height="12" viewBox="0 0 8 12"><path d="M.6 4.500L4 .5l3.4 4zM.6 7.200L4 11.200l3.4-4z" fill="#3f4562"/></svg>
<div class="t" style="left:202.500px;top:19.500px;font-size:11.800px;letter-spacing:-.5px">14.02</div>
<div class="t" style="left:246.500px;top:19.800px;font-size:11px;letter-spacing:-.6px">Pt</div>
<svg class="abs" style="left:261px;top:19px" width="8" height="12" viewBox="0 0 8 12"><path d="M.6 4.500L4 .5l3.4 4zM.6 7.200L4 11.200l3.4-4z" fill="#3f4562"/></svg>
<div class="abs" style="left:301px;top:10px;width:1px;height:30px;background:#e9e9e9"></div>
<div class="abs" style="left:312px;top:13px;width:24.500px;height:24px;background:#3f4562;border-radius:3.500px"></div>
<div class="abs" style="left:346px;top:10px;width:1px;height:30px;background:#e9e9e9"></div>
<!-- align center -->
<svg class="abs" style="left:358px;top:12px" width="26" height="26" viewBox="0 0 24 24"><path d="M7 15v2h10v-2H7zm-4 6h18v-2H3v2zm0-8h18v-2H3v2zm4-6v2h10V7H7zM3 3v2h18V3H3z" fill="#7d7d7d" transform="translate(0,.9) scale(1,.93)"/></svg>
<!-- aA -->
<div class="t" style="left:406.800px;top:14.800px;font-size:20px;font-weight:700;color:#7e7e7e;letter-spacing:-.2px;-webkit-text-stroke:.5px #7e7e7e;transform:scaleX(.99);transform-origin:left">aA</div>
<svg class="abs" style="left:408px;top:15.8px" width="12" height="6" viewBox="0 0 12 6"><path d="M1 3h8M6.5 .8L9.2 3 6.5 5.2" fill="none" stroke="#7e7e7e" stroke-width="1.1"/></svg>
<div class="t" style="left:461px;top:16.3px;font-size:18px;font-weight:700;color:#e2e2e2">B</div>
<div class="t" style="left:509px;top:15px;font-family:'Liberation Mono',monospace;font-style:italic;font-weight:700;font-size:20.500px;color:#e2e2e2">I</div>
<div class="abs" style="left:539px;top:10px;width:1px;height:30px;background:#e9e9e9"></div>
<!-- line spacing -->
<svg class="abs" style="left:551.5px;top:13.2px" width="25" height="25" viewBox="0 0 24 24"><path d="M6 7h2.500L5 3.5 1.5 7H4v10H1.500L5 20.5 8.5 17H6V7zm4-2v2h12V5H10zm0 14h12v-2H10v2zm0-6h12v-2H10v2z" fill="#787878"/></svg>
<!-- 123 -->
<svg class="abs" style="left:598px;top:15px" width="30" height="22" viewBox="0 0 30 22"><text x="14.500" y="16.200" text-anchor="middle" font-family="Liberation Sans" font-weight="700" font-size="14.5" letter-spacing="-.5" fill="#fff" stroke="#7c7c7c" stroke-width="3.4" stroke-linejoin="round" paint-order="stroke">123</text></svg>
<!-- bucket -->
<svg class="abs" style="left:647.500px;top:14.300px" width="22" height="22" viewBox="0 0 24 24"><path d="M16.56 8.940L7.62 0 6.21 1.410l2.38 2.38-5.15 5.150c-.59.59-.59 1.54 0 2.120l5.5 5.500c.29.29.68.44 1.06.440s.77-.15 1.06-.440l5.5-5.500c.59-.58.59-1.53 0-2.120zM5.21 10L10 5.21 14.79 10H5.210zM19 11.500s-2 2.17-2 3.500c0 1.1.9 2 2 2s2-.9 2-2c0-1.33-2-3.5-2-3.500z" fill="#787878"/></svg>
<div class="abs" style="left:711px;top:10px;width:1px;height:30px;background:#e9e9e9"></div>
<!-- refresh -->
<svg class="abs" style="left:726.700px;top:12px" width="25.2" height="25.2" viewBox="0 0 24 24"><path d="M17.65 6.350C16.2 4.9 14.21 4 12 4c-4.42 0-7.99 3.58-7.99 8s3.57 8 7.99 8c3.73 0 6.84-2.55 7.73-6h-2.080c-.82 2.33-3.04 4-5.65 4-3.31 0-6-2.69-6-6s2.69-6 6-6c1.66 0 3.14.69 4.22 1.780L13 11h7V4l-2.35 2.350z" fill="#808080"/></svg>
<!-- opacity -->
<svg class="abs" style="left:780.800px;top:12.200px" width="24.4" height="24.4" viewBox="0 0 24 24"><path d="M17.66 8L12 2.35 6.34 8C4.78 9.56 4 11.64 4 13.640s.78 4.11 2.34 5.67 3.61 2.35 5.66 2.35 4.1-.79 5.66-2.350S20 15.64 20 13.64 19.22 9.56 17.66 8zM6 14c.01-2 .62-3.27 1.77-4.410L12 5.270l4.23 4.370C17.38 10.77 17.99 12 18 14H6z" fill="#808080"/></svg>
<!-- layers -->
<svg class="abs" style="left:834.700px;top:12.200px" width="24.4" height="23.6" viewBox="0 0 24 24" preserveAspectRatio="none"><path d="M11.99 18.540l-7.37-5.730L3 14.070l9 7 9-7-1.63-1.27-7.38 5.740zM12 16l7.36-5.730L21 9l-9-7-9 7 1.63 1.270L12 16z" fill="#808080"/></svg>
<!-- tune -->
<svg class="abs" style="left:885.700px;top:13.400px" width="24" height="23.2" viewBox="0 0 24 24" preserveAspectRatio="none"><path d="M3 17v2h6v-2H3zM3 5v2h10V5H3zm10 16v-2h8v-2h-8v-2h-2v6h2zM7 9v2H3v2h4v2h2V9H7zm14 4v-2H11v2h10zm-6-4h2V7h4V5h-4V3h-2v6z" fill="#808080"/></svg>
</div>
<!-- CANVAS -->
<div id="canvas">
<div class="abs" style="left:673px;top:140px;width:437px;height:437px;background:#fff84f;box-shadow:0 1px 4px rgba(0,0,0,.10)"></div>
<svg class="abs" style="left:673px;top:140px" width="437" height="437" viewBox="673 140 437 437">
<path d="M701.600 295.800L1080.400 283.300C1088 290 1094.500 310 1097 332L1096 382C1085 392 1075 398 1073 407C1068 440 1065 470 1062.500 511L707 513C702 470 695 420 691 390L691 316C692 305 696 298 701.600 295.800Z" fill="none" stroke="#e8502e" stroke-width=".8"/>
<g fill="none" stroke="#fc5c5c" stroke-width="12.600" stroke-linecap="round" stroke-linejoin="round">
<path d="M756 384.700V343.500L778.600 372L801.200 343.500V384.700"/>
<path d="M848 343.500H819.700V384.700H848M819.700 364H845"/>
<path d="M865 343.500L904 384.700M904 343.500L865 384.700"/>
<path d="M921 343.500V384.700"/>
<path d="M971.7 348A20.6 20.6 0 1 0 971.7 380.2"/>
<circle cx="1008.500" cy="364.100" r="20.500"/>
</g>
<text x="845" y="429" font-family="Liberation Mono" font-size="13.800" fill="#35424f" textLength="96" lengthAdjust="spacingAndGlyphs">THE LOW-DOWN</text>
<path d="M750 425.500c10-1.200 20-2 34-1.800 12-.6 22-.2 33 .6-10 .9-20 .8-30 1.600-14 .5-26 .4-37-.4z" fill="#35424f"/>
<path d="M962 424.500c12-.4 24-1 36-.6 11-.3 21 .2 31 1-11 .9-22 .6-33 1.300-12 .4-23-.1-34-1.700z" fill="#35424f"/>
</svg>
<!-- pager -->
<div class="abs" style="left:1117.500px;top:266.500px;width:24.500px;height:38.500px;border-radius:12px;background:#ebebeb"></div>
<svg class="abs" style="left:1119px;top:275px" width="21" height="21" viewBox="0 0 24 24"><path d="M4 12l1.410 1.410L11 7.830V20h2V7.830l5.580 5.590L20 12l-8-8-8 8z" fill="#c4c4c4"/></svg>
<div class="t" style="left:1117.500px;top:329px;font-size:14px;letter-spacing:1.700px;color:#4a506b">4/9</div>
<div class="abs" style="left:1117.500px;top:367px;width:24.500px;height:38.500px;border-radius:12px;background:#ebebeb"></div>
<svg class="abs" style="left:1119px;top:375.500px" width="21" height="21" viewBox="0 0 24 24"><path d="M20 12l-1.410-1.410L13 16.170V4h-2v12.170l-5.580-5.590L4 12l8 8 8-8z" fill="#c4c4c4"/></svg>
<svg class="abs" style="left:1119px;top:427px" width="21" height="21" viewBox="0 0 24 24"><path d="M17.650 6.350C16.200 4.900 14.210 4 12 4c-4.420 0-7.990 3.580-7.990 8s3.570 8 7.990 8c3.730 0 6.840-2.550 7.730-6h-2.080c-.82 2.330-3.040 4-5.650 4-3.310 0-6-2.690-6-6s2.690-6 6-6c1.660 0 3.140.69 4.220 1.780L13 11h7V4l-2.350 2.350z" fill="#c0c0c0"/></svg>
<!-- tip -->
<div class="abs" style="left:1099px;top:106px;width:262px;height:70.500px;background:#fff;box-shadow:0 2px 8px rgba(0,0,0,.10)"></div>
<svg class="abs" style="left:1109px;top:117px" width="50" height="50" viewBox="0 0 50 50"><circle cx="25" cy="25" r="24.800" fill="#2d4059"/>
<path d="M25 12.500c-5.300 0-9.300 4-9.300 9 0 3.300 1.700 5.600 3.300 7.600 1 1.300 1.500 2.900 1.500 4.400h4.500z" fill="#f7b731"/><path d="M25 12.500c5.300 0 9.300 4 9.300 9 0 3.300-1.700 5.600-3.300 7.600-1 1.300-1.500 2.900-1.500 4.400H25z" fill="#f79a2a"/>
<path d="M19.300 34.500h11.400v5.500c0 2-1.800 3.800-3.600 4.600h-4.200c-1.800-.8-3.600-2.600-3.600-4.600z" fill="#d4d8de"/><path d="M25 34.500h5.700v5.500c0 2-1.800 3.800-3.600 4.600H25z" fill="#aab1bb"/><path d="M19.300 37.200h11.400M19.300 39.800h11.400" stroke="#eef0f2" stroke-width=".8"/>
<path d="M22.300 33v-6l1.400-1.800 1.300 1.800 1.300-1.800 1.400 1.800v6" fill="none" stroke="#f0622a" stroke-width=".9"/>
<g stroke="#f7c65a" stroke-width="2.200" stroke-linecap="round"><path d="M25 5.500v3.500M13.500 10.500l2.300 2.700M36.500 10.500l-2.300 2.700M8.700 22h3.400M37.900 22h3.400"/></g></svg>
<div class="t" style="left:1169px;top:118.300px;font-size:13px;letter-spacing:.23px;color:#4a506b">- Double click to edit text</div>
<div class="t" style="left:1169px;top:135.300px;font-size:13px;letter-spacing:.2px;color:#4a506b">- Right click on selected layers</div>
<div class="t" style="left:1169px;top:152.300px;font-size:13px;letter-spacing:.32px;color:#4a506b">to show context menu</div>
<div class="abs" style="left:1334.300px;top:96px;width:20px;height:20px;border-radius:50%;background:#fff;box-shadow:0 1px 3px rgba(0,0,0,.16)"></div>
<svg class="abs" style="left:1335.300px;top:97px" width="18" height="18" viewBox="0 0 24 24"><path d="M19 6.410L17.590 5 12 10.590 6.410 5 5 6.410 10.590 12 5 17.590 6.410 19 12 13.410 17.590 19 19 17.590 13.410 12z" fill="#5a5a5a"/></svg>
<div class="abs" style="left:1324px;top:167.500px;width:20px;height:19px;border-radius:2px;background:#fff;box-shadow:0 1px 3px rgba(0,0,0,.25)"></div>
<svg class="abs" style="left:1325px;top:168px" width="18" height="18" viewBox="0 0 24 24"><path d="M10 6L8.590 7.410 13.170 12l-4.580 4.590L10 18l6-6z" fill="#3f4562"/></svg>
<!-- zoom -->
<div class="abs" style="left:1188px;top:589px;width:146px;height:33px;border-radius:17px;background:#fff;box-shadow:0 1px 4px rgba(0,0,0,.22)"></div>
<div class="abs" style="left:1222px;top:589px;width:1px;height:33px;background:#e6e6e6"></div>
<svg class="abs" style="left:1194.500px;top:594.500px" width="22" height="22" viewBox="0 0 24 24"><path d="M7 14H5v5h5v-2H7v-3zm-2-4h2V7h3V5H5v5zm12 7h-3v2h5v-5h-2v3zM14 5v2h3v3h2V5h-5z" fill="#767676"/></svg>
<svg class="abs" style="left:1229px;top:594px" width="22" height="22" viewBox="0 0 24 24"><path d="M19 13H5v-2h14v2z" fill="#767676"/></svg>
<div class="t" style="left:1262px;top:598.500px;font-size:13.500px;letter-spacing:-.5px;color:#4a506b">100%</div>
<svg class="abs" style="left:1305.500px;top:594px" width="23" height="23" viewBox="0 0 24 24"><path d="M19 13h-6v6h-2v-6H5v-2h6V5h2v6h6v2z" fill="#767676"/></svg>
<!-- bottom tab -->
<div class="abs" style="left:857px;top:620.500px;width:68px;height:12px;border-radius:7px 7px 0 0;background:#d0d5dc"></div>
<div class="abs" style="left:889.500px;top:623.800px;width:2.500px;height:3px;border-radius:1px;background:#5a607a"></div>
</div>
<!-- DIALOG -->
<div id="dlg">
<div class="abs" style="left:212px;top:225px;width:400px;height:340px;background:#fff;border-radius:5px 5px 3px 3px;box-shadow:0 1px 6px rgba(0,0,0,.18)"></div>
<div class="abs" style="left:212px;top:225px;width:400px;height:40px;background:#3f4562;border-radius:5px 5px 0 0"></div>
<div class="t" style="left:373.500px;top:237.300px;font-size:15px;letter-spacing:.16px;color:#fff">3D preview</div>
<svg class="abs" style="left:511px;top:233.500px" width="22" height="22" viewBox="0 0 26 26"><path d="M2.600 12.500A10.500 10.500 0 0 0 12 23.400M23.400 13.500A10.500 10.500 0 0 0 14 2.600" fill="none" stroke="#fff" stroke-width="1.400"/><path d="M10.200 24l3.400-2.200-1 4zM15.800 2l-3.400 2.200 1-4z" fill="#fff"/><text x="13" y="16.600" font-family="Liberation Sans" font-size="9.500" fill="#fff" text-anchor="middle" letter-spacing="-.3">3D</text></svg>
<div class="abs" style="left:549px;top:236px;width:17px;height:17px;border:2px solid #fff;border-radius:2px"></div>
<svg class="abs" style="left:578.500px;top:231.500px" width="26" height="26" viewBox="0 0 24 24"><path d="M19 6.410L17.590 5 12 10.590 6.410 5 5 6.410 10.590 12 5 17.590 6.410 19 12 13.410 17.590 19 19 17.590 13.410 12z" fill="#fff" stroke="#fff" stroke-width=".6"/></svg>
<div class="abs" style="left:217px;top:270px;width:31.5px;height:31.5px;border:1px solid #e2e2e2;border-radius:4px;background:#fff"></div>
<svg class="abs" style="left:223.2px;top:277px" width="19" height="19" viewBox="0 0 24 24"><circle cx="12" cy="12" r="3.200" fill="#757575"/><path d="M9 2L7.170 4H4c-1.100 0-2 .9-2 2v12c0 1.100.9 2 2 2h16c1.100 0 2-.9 2-2V6c0-1.100-.9-2-2-2h-3.170L15 2H9zm3 15c-2.760 0-5-2.240-5-5s2.240-5 5-5 5 2.240 5 5-2.240 5-5 5z" fill="#757575"/></svg>
<svg class="abs" style="left:597px;top:550px" width="14" height="14" viewBox="0 0 14 14"><path d="M1.500 12.500l11-11M6.500 12.500l6-6" stroke="#8a8a8a" stroke-width="1" fill="none"/></svg>
<!-- CAR -->
<svg class="abs" style="left:212px;top:325px" width="400" height="180" viewBox="212 325 400 180">
<defs>
<linearGradient id="hood" x1="0" y1="0" x2="1" y2="0"><stop offset="0" stop-color="#a6aeac"/><stop offset=".33" stop-color="#bcc4c2"/><stop offset=".5" stop-color="#a0a5a2"/><stop offset=".85" stop-color="#9a9e9b"/><stop offset="1" stop-color="#7c8280"/></linearGradient>
<linearGradient id="door" x1="0" y1="0" x2="0" y2="1"><stop offset="0" stop-color="#fff40a"/><stop offset=".7" stop-color="#fdf014"/><stop offset="1" stop-color="#e8dc14"/></linearGradient>
</defs>
<!-- far wheels -->
<ellipse cx="336" cy="466" rx="18" ry="15" fill="#050505"/><ellipse cx="471.500" cy="465" rx="21.500" ry="15" fill="#050505"/>
<path d="M329 468c2-2 6-2.500 8.500-1l-2 3.800c-2.500.8-5-.2-6.500-2.800z" fill="#fff"/><path d="M331 463l8-1 1 3.500-7 .5z" fill="#555"/><path d="M466.500 467.500l4-1.500 1.500 3-3 1z" fill="#fff"/><path d="M476.800 463l3-1 .5 3-2.500 1z" fill="#fff"/><path d="M464 463l12.500-1.500.5 3.500-12 1.500z" fill="#4a4a4a"/>
<!-- body silhouette -->
<path d="M215.200 434.800L218.400 422L221 409.800L247.500 390.500L249 375.500L285 365.300L343 365L375 336.500C377 335 380 334.800 384 334.800L466 341.3L495 344L516.800 350L531.200 356.400L535.200 363.600L544 373.200L555.200 379.600L560 386L560.800 397.200L579.200 413.200L582.500 426L583.500 440L578 446L500 460L340 460L230.600 453.300L219 448.800Z" fill="#030303"/>
<!-- hood -->
<path d="M250.600 374.800L284 365.600L340.500 365.100L350 368L349 397L337 387.600L328 383.200L266.500 380.600L248.800 389.400L248 381.500Z" fill="url(#hood)"/>
<path d="M262 371l22-5.400 50-.3c-8 1.200-16 1-24 2.200l-26 .5z" fill="#5c605e" opacity=".8"/>
<path d="M283 366.500l1.500 14" stroke="#d4dad8" stroke-width="1.200" fill="none"/>
<path d="M266.500 380.600l61.500 2.600 9 4.400-2-4.800-66-4.400z" fill="#a8aeac"/>
<path d="M337 372l8 2 4 12-2 10-9-8z" fill="#6a7074"/><path d="M338 373l3 1-1 4zM339 384l4 1 1 4-4-1z" fill="#c8ccd0"/><path d="M340 372l3 3" stroke="#b06848" stroke-width=".8"/>
<!-- door -->
<path d="M349.8 368.3L486 371C491 378 494 385 493.7 392L485 446L351.5 445.5C349.500 420 348.500 395 349.800 368.300Z" fill="url(#door)"/>
<!-- green -->
<path d="M488 370.800L504 370L514.400 357.200L531.200 356.400L535.200 363.600L544 373.200L555.200 379.600L560 386L560.800 397.200L528 390.800L504 391.600L495.200 398.800L493.600 378Z" fill="#169816"/>
<path d="M496 384c10-3 24-4 36-2l28 8 .8 7.200-32.800-6.400-24 .8-8.800 7.200z" fill="#0f7c12"/>
<path d="M514.500 364.500c3 1 6 3 8 5l4-3 2 6 6 2-3 3 6 4 4-1 5 5 4 3-8-1-6-3-8 1-6-2 3-4-6-3-6-4c-1-3-2-6-5-8z" fill="#e8388e"/><path d="M520 380c2-2 6-2 8 0M540 372c3 1 5 3 6 6M532 384c4 2 10 2 14 0" stroke="#7a6a30" stroke-width=".9" fill="none"/>
<!-- MEXICO on door -->
<g fill="none" stroke="#f02c1c" stroke-width="4.600" stroke-linecap="round" stroke-linejoin="round" transform="translate(371.500,378.300) rotate(1.700) scale(.36,.395) translate(-749.500,-337.500)">
<g stroke-width="14.800">
<path d="M756 384.700V343.500L778.600 372L801.200 343.500V384.700"/><path d="M848 343.500H819.700V384.700H848M819.700 364H845"/><path d="M865 343.500L904 384.700M904 343.500L865 384.700"/><path d="M921 343.500V384.700"/><path d="M971.700 348A20.600 20.600 0 1 0 971.700 380.200"/><circle cx="1008.500" cy="364.100" r="20.500"/></g></g>
<path d="M462 381c6-2 16-1.500 21.500 1v2.500c-6-1.500-14-2-21.500-.5z" fill="#0a0a0a"/>
<text x="408" y="414.300" font-family="Liberation Mono" font-weight="700" font-size="5.600" fill="#3e3e18" textLength="34.500" lengthAdjust="spacingAndGlyphs" transform="rotate(1.200 408 414)">THE LOW-DOWN</text><path d="M371 410.800c8-.9 18-.8 26 .2-8 1.300-18 1.200-26-.2zM450 413.200c7-.8 15-.5 22 .6-7 1.200-15 .9-22-.6z" fill="#2e2e18"/>
<!-- wheels -->
<ellipse cx="282" cy="453.500" rx="50.500" ry="44.500" fill="#030303"/>
<ellipse cx="540.500" cy="452.500" rx="38.800" ry="39.500" fill="#030303" transform="rotate(-8 540.500 452.500)"/>
<ellipse cx="279" cy="452" rx="33" ry="31" fill="none" stroke="#1a1a1a" stroke-width="2"/><ellipse cx="279" cy="452" rx="9" ry="8" fill="#161616"/>
<ellipse cx="538" cy="452" rx="27" ry="29" fill="none" stroke="#1a1a1a" stroke-width="2"/>
<path d="M271.500 469c4.500-3.500 11.500-4 17.500-1.500l-4 7.500c-5 2.500-10 .5-13.500-6z" fill="#fff"/><path d="M299 462.500l7.500-1-1.500 4.500-5.500.8z" fill="#fff"/><path d="M298 451l6 1 1 8-5-1z" fill="#3a3a3a"/><path d="M292 434.500l8 1.500-2 3-6-1.500z" fill="#2c2c2c"/><g fill="#3a3a3a"><circle cx="285.500" cy="444" r="1.500"/><circle cx="277.800" cy="450" r="1.500"/><circle cx="291" cy="450.400" r="1.500"/><circle cx="283.400" cy="456.300" r="1.500"/></g>
<path d="M539.500 473.500c2-3.500 5-6 9-7.500l.5 2.500c-2 3-5.500 5-9.500 5z" fill="#fff"/><path d="M526.500 461.500l2.500-1 2.500 4-2 1.500z" fill="#fff"/><path d="M529 459l4.500-1 1.500 4.500-3.500 1.500z" fill="#5a5a5a"/><g fill="#3a3a3a"><circle cx="540.300" cy="447.500" r="1.400"/><circle cx="536.500" cy="452.300" r="1.400"/><circle cx="545.600" cy="452.300" r="1.400"/><circle cx="542" cy="457.300" r="1.400"/></g><path d="M528 440l6-1.500 1 2-6 1.500z" fill="#3a3a3a"/>
</svg>
</div>
</body></html>
